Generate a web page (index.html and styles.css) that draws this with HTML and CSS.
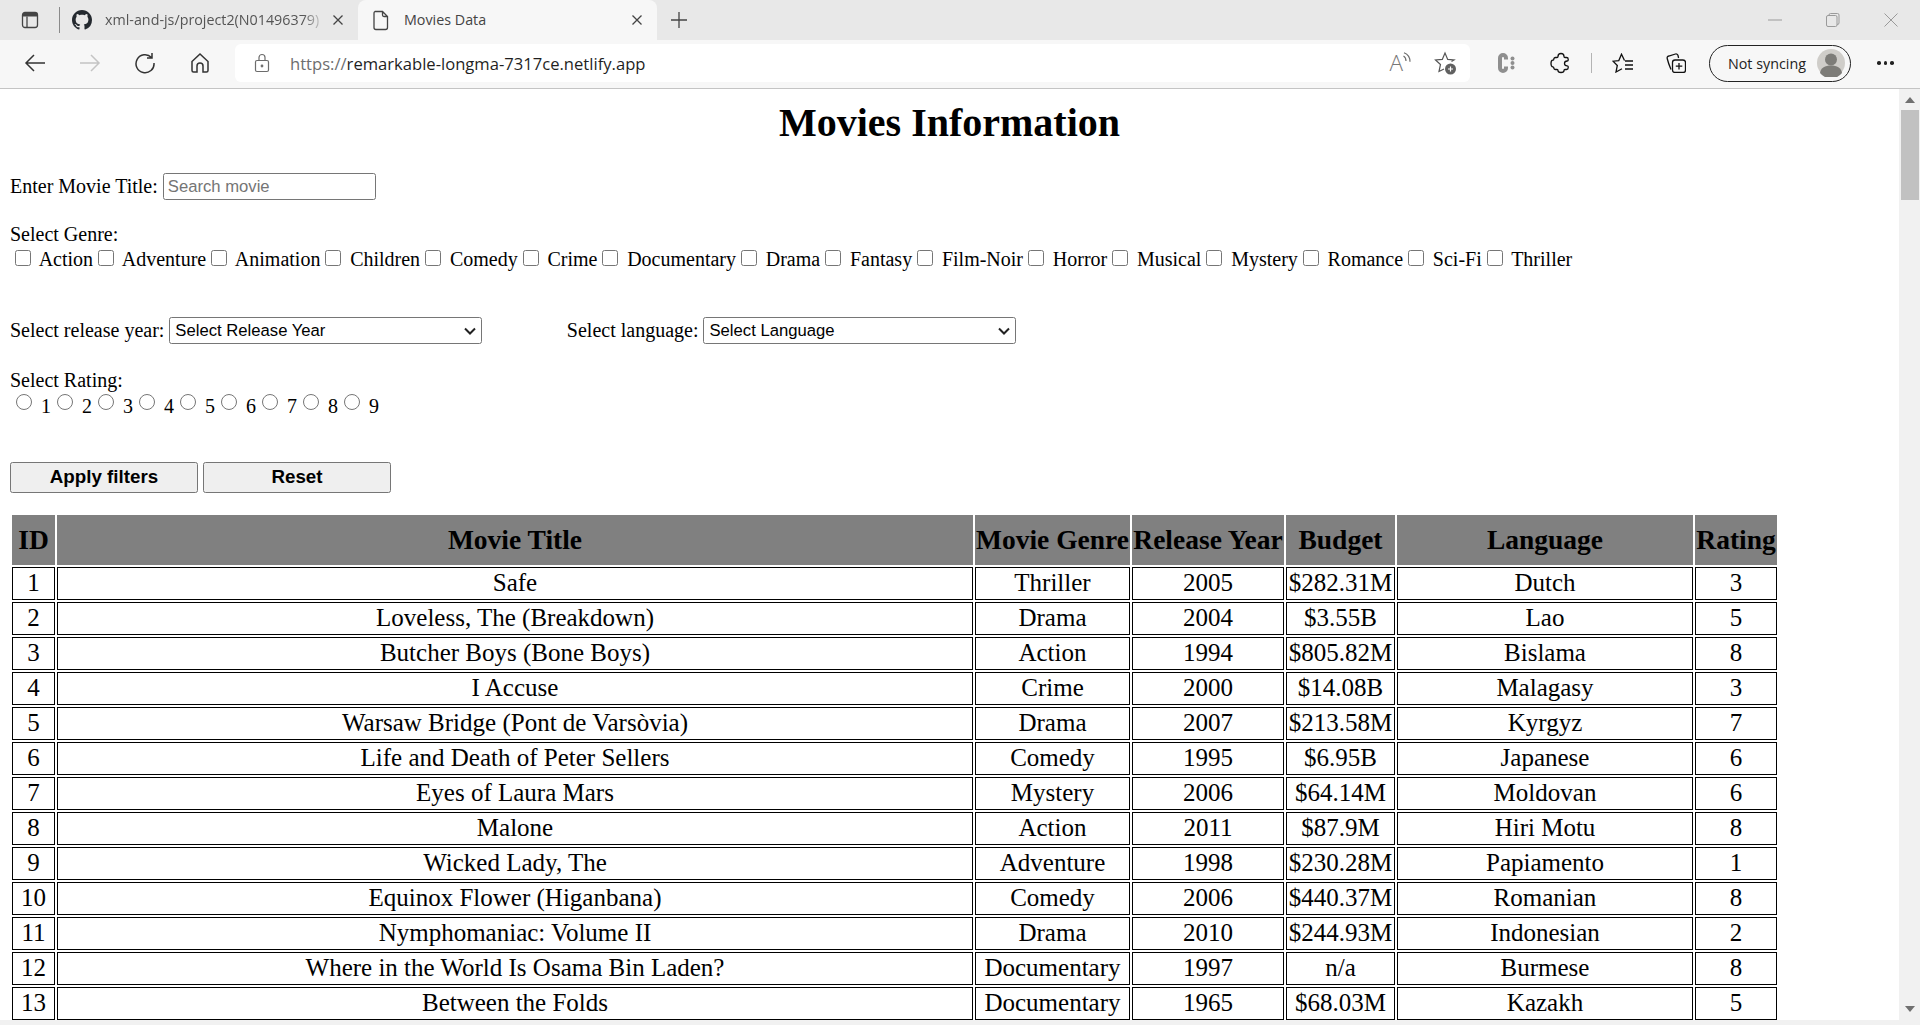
FILE: index.html
```html
<!DOCTYPE html>
<html lang="en">
<head>
<meta charset="utf-8">
<title>Movies Data</title>
<link rel="stylesheet" href="styles.css">
</head>
<body>
<div class="browser">
  <header class="tabstrip">
    <span class="strip-btn"><svg width="18" height="18" viewBox="0 0 18 18" class="ico"><rect x="1.500" y="1.500" width="15" height="15" rx="2.500"/><path d="M6 5.500v11"/><path d="M2 2h14v3.500H2z" fill="#444" stroke="none"/></svg></span>
    <span class="strip-div"></span>
    <div class="tab">
      <svg width="20" height="20" viewBox="0 0 16 16" class="tab-ico"><path fill="#24292f" d="M8 0C3.580 0 0 3.580 0 8c0 3.540 2.290 6.530 5.470 7.590.4.070.55-.17.55-.38 0-.19-.01-.82-.01-1.490-2.010.37-2.530-.49-2.690-.94-.09-.23-.48-.94-.82-1.130-.28-.15-.68-.52-.01-.53.63-.01 1.080.58 1.230.82.720 1.210 1.870.87 2.330.66.070-.52.280-.87.510-1.070-1.780-.2-3.640-.89-3.640-3.950 0-.87.310-1.590.820-2.150-.08-.2-.36-1.020.08-2.120 0 0 .670-.21 2.200.820.640-.180 1.320-.270 2-.270s1.360.090 2 .270c1.530-1.040 2.200-.820 2.200-.820.440 1.100.160 1.920.080 2.120.510.560.820 1.270.820 2.150 0 3.070-1.870 3.750-3.650 3.950.290.250.540.730.540 1.480 0 1.070-.010 1.930-.010 2.200 0 .210.150.460.550.380A8.013 8.013 0 0 0 16 8c0-4.420-3.580-8-8-8z"/></svg>
      <span class="tab-title fade">xml-and-js/project2(N01496379)</span>
      <svg width="14" height="14" viewBox="0 0 14 14" class="ico close-x"><path d="M2.500 2.500l9 9M11.500 2.500l-9 9"/></svg>
    </div>
    <div class="tab tab-active">
      <svg width="20" height="22" viewBox="0 0 20 22" class="ico"><path d="M4 2.500h7.500l5 5v11a2 2 0 0 1-2 2H5a2 2 0 0 1-2-2v-14a2 2 0 0 1 1-2zM11.500 2.500v3.500a1.500 1.500 0 0 0 1.500 1.500h3.500"/></svg>
      <span class="tab-title">Movies Data</span>
      <svg width="14" height="14" viewBox="0 0 14 14" class="ico close-x"><path d="M2.500 2.500l9 9M11.500 2.500l-9 9"/></svg>
    </div>
    <span class="new-tab"><svg width="18" height="18" viewBox="0 0 18 18" class="ico"><path d="M9 1v16M1 9h16"/></svg></span>
    <div class="window-btns">
      <span class="win-btn"><svg width="14" height="14" viewBox="0 0 14 14" class="ico faint"><path d="M0 7h14"/></svg></span>
      <span class="win-btn"><svg width="14" height="14" viewBox="0 0 14 14" class="ico faint"><rect x=".5" y="2.500" width="10.500" height="11" rx="1.500"/><path d="M3 2.500V2a1.500 1.500 0 0 1 1.500-1.500h7A1.500 1.500 0 0 1 13 2v8a1.500 1.500 0 0 1-2 1.300"/></svg></span>
      <span class="win-btn"><svg width="14" height="14" viewBox="0 0 14 14" class="ico faint"><path d="M.5.5l13 13M13.500.5l-13 13"/></svg></span>
    </div>
  </header>

  <nav class="toolbar">
    <span class="tool"><svg width="22" height="20" viewBox="0 0 22 20" class="ico dark"><path d="M21 10H2M10 2l-8 8 8 8"/></svg></span>
    <span class="tool"><svg width="22" height="20" viewBox="0 0 22 20" class="ico pale"><path d="M1 10h19M12 2l8 8-8 8"/></svg></span>
    <span class="tool"><svg width="22" height="22" viewBox="0 0 22 22" class="ico dark"><path d="M17.500 5.500A9 9 0 1 0 20 11M18 1v5h-5"/></svg></span>
    <span class="tool"><svg width="22" height="22" viewBox="0 0 22 22" class="ico dark"><path d="M3 9.500L11 2l8 7.500v9a1.500 1.500 0 0 1-1.500 1.500H14v-6a3 3 0 0 0-6 0v6H4.500A1.500 1.500 0 0 1 3 18.500z"/></svg></span>
    <div class="address">
      <svg width="16" height="20" viewBox="0 0 16 20" class="ico grey"><rect x="1.500" y="7.500" width="13" height="11" rx="1.500"/><path d="M5 7.500V4.500a3 3 0 0 1 6 0v3"/><circle cx="8" cy="13" r=".8"/></svg>
      <span class="url"><span class="url-scheme">https://</span>remarkable-longma-7317ce.netlify.app</span>
      <span class="addr-icons">
        <span class="addr-read">A<svg width="8" height="13" viewBox="0 0 8 13" class="ico grey"><path d="M.5 4c1.500.8 2.500 2.500 2.500 5M1 .7c3.500 1.300 6 4.300 6 9"/></svg></span>
        <svg width="24" height="24" viewBox="0 0 24 24" class="ico star-add"><path d="M18.500 10.500l2.500-1.500-6.300-.6L12 2 9.300 8.400 2.500 9l5 4.500-1.500 7 5-2.500"/><circle cx="17.500" cy="18" r="5.500" fill="#606060" stroke="none"/><path d="M17.500 15.500v5M15 18h5" stroke="#fff"/></svg>
      </span>
    </div>
    <span class="tool tool-first"><svg width="18" height="20" viewBox="0 0 18 20" class="ext-c"><path d="M9 6.500V5a3 3 0 0 0-6 0v10a3 3 0 0 0 6 0v-1.500" fill="none" stroke="#8f8f8f" stroke-width="4"/><circle cx="15.500" cy="5.500" r="2" fill="#8f8f8f"/><circle cx="15.500" cy="10" r="2" fill="#8f8f8f"/><circle cx="15.500" cy="14.500" r="2" fill="#8f8f8f"/></svg></span>
    <span class="tool"><svg width="22" height="22" viewBox="0 0 22 22" class="ico black"><path d="M8 4.500C8 2.800 9.300 1.500 11 1.500s3 1.300 3 3c0 .6.400 1 1 1h1.500c1 0 1.700.7 1.700 1.700V8c0 .6-.4 1-1 1-1.600 0-2.700 1-2.700 2.400s1.100 2.400 2.700 2.400c.6 0 1 .4 1 1v1c0 1-.7 1.700-1.700 1.700H15c-.6 0-1 .4-1 1 0 1.200-1.300 2-3 2s-3-.8-3-2c0-.6-.4-1-1-1H5.500c-1 0-1.700-.7-1.700-1.700 0-.6-.4-1-1-1C1.800 14.800 1 13.400 1 11.500S1.800 8.200 2.800 8.200c.6 0 1-.4 1-1 0-1 .7-1.700 1.700-1.700H7c.6 0 1-.4 1-1z"/></svg></span>
    <span class="tool-sep"></span>
    <span class="tool"><svg width="22" height="20" viewBox="0 0 22 20" class="ico black"><path d="M12.500 7.500L9.500 1.200 6.800 7.600 1 8.200l4.300 4.300L4 19l6-3.200M13 8h8M13 12h8M13 16h8"/></svg></span>
    <span class="tool"><svg width="20" height="20" viewBox="0 0 20 20" class="ico black coll"><rect x="6.500" y="7" width="13" height="12.500" rx="2.500"/><path d="M13 10v6.500M9.800 13.200h6.500M5 16.500C3.500 13 2 9 1.200 5.500a2 2 0 0 1 1.500-2.500L9.500 1a2 2 0 0 1 2.500 1.500l.6 2.500"/></svg></span>
    <div class="sync">
      <span>Not syncing</span>
      <span class="avatar"><svg width="28" height="28" viewBox="0 0 28 28"><circle cx="14" cy="14" r="14" fill="#cfcdc9"/><circle cx="14" cy="10.500" r="6" fill="#7d7c78"/><path d="M3 24c1-5.500 5-7.500 11-7.500s10 2 11 7.500a14 14 0 0 1-22 0z" fill="#7d7c78"/></svg></span>
    </div>
    <span class="tool tool-more"><i></i><i></i><i></i></span>
  </nav>

  <div class="viewport">
    <main class="page">
      <h1 class="title">Movies Information</h1>
      <div class="row-search">
        <label for="search">Enter Movie Title:</label>
        <input id="search" class="text-input" type="text" placeholder="Search movie">
      </div>
      <div class="row-genre">
        <div>Select Genre:</div>
        <input type="checkbox" class="check"> <label>Action</label><input type="checkbox" class="check"> <label>Adventure</label><input type="checkbox" class="check"> <label>Animation</label><input type="checkbox" class="check"> <label>Children</label><input type="checkbox" class="check"> <label>Comedy</label><input type="checkbox" class="check"> <label>Crime</label><input type="checkbox" class="check"> <label>Documentary</label><input type="checkbox" class="check"> <label>Drama</label><input type="checkbox" class="check"> <label>Fantasy</label><input type="checkbox" class="check"> <label>Film-Noir</label><input type="checkbox" class="check"> <label>Horror</label><input type="checkbox" class="check"> <label>Musical</label><input type="checkbox" class="check"> <label>Mystery</label><input type="checkbox" class="check"> <label>Romance</label><input type="checkbox" class="check"> <label>Sci-Fi</label><input type="checkbox" class="check"> <label>Thriller</label>
      </div>
      <div class="row-selects">
        <label>Select release year:</label>
        <span class="select-wrap">
          <select class="select"><option>Select Release Year</option></select>
          <svg width="12" height="8" viewBox="0 0 12 8" class="chevron"><path d="M1 1.500l5 5 5-5"/></svg>
        </span>
        <label class="lang-label">Select language:</label>
        <span class="select-wrap">
          <select class="select"><option>Select Language</option></select>
          <svg width="12" height="8" viewBox="0 0 12 8" class="chevron"><path d="M1 1.500l5 5 5-5"/></svg>
        </span>
      </div>
      <div class="row-rating">
        <div>Select Rating:</div>
        <div class="radio-line"><input type="radio" name="r" class="radio"> <label>1</label><input type="radio" name="r" class="radio"> <label>2</label><input type="radio" name="r" class="radio"> <label>3</label><input type="radio" name="r" class="radio"> <label>4</label><input type="radio" name="r" class="radio"> <label>5</label><input type="radio" name="r" class="radio"> <label>6</label><input type="radio" name="r" class="radio"> <label>7</label><input type="radio" name="r" class="radio"> <label>8</label><input type="radio" name="r" class="radio"> <label>9</label></div>
      </div>
      <div class="row-buttons">
        <button class="btn">Apply filters</button>
        <button class="btn">Reset</button>
      </div>
      <table class="movies">
        <colgroup>
          <col class="c-id"><col class="c-title"><col class="c-genre"><col class="c-year"><col class="c-budget"><col class="c-lang"><col class="c-rating">
        </colgroup>
        <thead>
          <tr><th>ID</th><th>Movie Title</th><th>Movie Genre</th><th>Release Year</th><th>Budget</th><th>Language</th><th>Rating</th></tr>
        </thead>
        <tbody>
          <tr><td>1</td><td>Safe</td><td>Thriller</td><td>2005</td><td>$282.31M</td><td>Dutch</td><td>3</td></tr>
          <tr><td>2</td><td>Loveless, The (Breakdown)</td><td>Drama</td><td>2004</td><td>$3.55B</td><td>Lao</td><td>5</td></tr>
          <tr><td>3</td><td>Butcher Boys (Bone Boys)</td><td>Action</td><td>1994</td><td>$805.82M</td><td>Bislama</td><td>8</td></tr>
          <tr><td>4</td><td>I Accuse</td><td>Crime</td><td>2000</td><td>$14.08B</td><td>Malagasy</td><td>3</td></tr>
          <tr><td>5</td><td>Warsaw Bridge (Pont de Varsòvia)</td><td>Drama</td><td>2007</td><td>$213.58M</td><td>Kyrgyz</td><td>7</td></tr>
          <tr><td>6</td><td>Life and Death of Peter Sellers</td><td>Comedy</td><td>1995</td><td>$6.95B</td><td>Japanese</td><td>6</td></tr>
          <tr><td>7</td><td>Eyes of Laura Mars</td><td>Mystery</td><td>2006</td><td>$64.14M</td><td>Moldovan</td><td>6</td></tr>
          <tr><td>8</td><td>Malone</td><td>Action</td><td>2011</td><td>$87.9M</td><td>Hiri Motu</td><td>8</td></tr>
          <tr><td>9</td><td>Wicked Lady, The</td><td>Adventure</td><td>1998</td><td>$230.28M</td><td>Papiamento</td><td>1</td></tr>
          <tr><td>10</td><td>Equinox Flower (Higanbana)</td><td>Comedy</td><td>2006</td><td>$440.37M</td><td>Romanian</td><td>8</td></tr>
          <tr><td>11</td><td>Nymphomaniac: Volume II</td><td>Drama</td><td>2010</td><td>$244.93M</td><td>Indonesian</td><td>2</td></tr>
          <tr><td>12</td><td>Where in the World Is Osama Bin Laden?</td><td>Documentary</td><td>1997</td><td>n/a</td><td>Burmese</td><td>8</td></tr>
          <tr><td>13</td><td>Between the Folds</td><td>Documentary</td><td>1965</td><td>$68.03M</td><td>Kazakh</td><td>5</td></tr>
        </tbody>
      </table>
    </main>
    <aside class="vscroll">
      <span class="arrow-up"></span>
      <span class="thumb"></span>
      <span class="arrow-down"></span>
    </aside>
  </div>
  <div class="hscroll"></div>
</div>
</body>
</html>
```
FILE: styles.css
```css
* { box-sizing: border-box; }
html, body { margin: 0; height: 100%; overflow: hidden; }
body { font-family: "Liberation Serif", serif; color: #000; background: #fff; }
.browser { height: 100vh; display: flex; flex-direction: column; overflow: hidden; }

.ico { fill: none; stroke: #444; stroke-width: 1.300; display: block; flex: none; }
.ico.faint { stroke: #9a9a9a; stroke-width: 1; }
.ico.dark { stroke: #333; stroke-width: 1.500; }
.ico.pale { stroke: #c4c4c4; stroke-width: 1.500; }
.ico.grey { stroke: #6c6c6c; stroke-width: 1.200; }
.ico.black { stroke: #111; stroke-width: 1.300; }
.ico.star-add { stroke: #555; stroke-width: 1.200; }
.coll { margin-right: 3px; }

.tabstrip { flex: none; height: 40px; background: #e8e8e8; display: flex; align-items: stretch; font-family: "Open Sans", sans-serif; color: #444; }
.strip-btn { width: 59px; display: flex; align-items: center; justify-content: center; }
.strip-div { width: 1px; height: 26px; background: #8a8a8a; align-self: center; margin-right: 12px; }
.tab { width: 286px; display: flex; align-items: center; gap: 13px; padding-right: 5px; padding-bottom: 1px; }
.tab-ico { flex: none; }
.tab-title { flex: 1; white-space: nowrap; overflow: hidden; font-size: 14.300px; padding-bottom: 1px; }
.fade { color: #555; margin-right: -7px; -webkit-mask-image: linear-gradient(90deg, #000 90%, transparent); mask-image: linear-gradient(90deg, #000 90%, transparent); }
.close-x { stroke: #444; margin-right: 8px; }
.tab-active { width: 299px; background: #f7f7f7; border-radius: 8px 8px 0 0; padding-left: 13px; }
.new-tab { width: 44px; display: flex; align-items: center; justify-content: center; }
.window-btns { margin-left: auto; display: flex; }
.win-btn { width: 58px; height: 40px; display: flex; align-items: center; justify-content: center; }

.toolbar { flex: none; height: 49px; background: #f7f7f7; border-bottom: 1px solid #c4c4c4; padding: 4px 0 6px 7px; display: flex; align-items: center; font-family: "Open Sans", sans-serif; }
.tool { width: 55px; flex: none; display: flex; align-items: center; justify-content: center; }
.address { width: 1235px; height: 38px; margin-left: 8px; background: #fff; border-radius: 6px; display: flex; align-items: center; padding-left: 19px; flex: none; }
.url { margin-left: 20px; font-size: 16.600px; color: #1f1f1f; white-space: nowrap; }
.url-scheme { color: #6e6e6e; }
.addr-icons { margin-left: auto; display: flex; align-items: center; gap: 22px; padding-right: 13px; }
.addr-read { display: flex; align-items: flex-start; font-size: 22.500px; color: #777; line-height: 1; font-weight: 300; }
.tool-first { margin-left: 8px; }
.ext-c { display: block; flex: none; }
.tool-sep { width: 1px; height: 20px; background: #b4b4b4; margin: 0 3px; flex: none; }
.sync { width: 142px; height: 37px; margin-left: 4px; border: 1.500px solid #222; border-radius: 19px; display: flex; align-items: center; justify-content: space-between; padding: 0 5px 0 18px; font-size: 14.300px; color: #222; flex: none; }
.avatar { display: block; width: 28px; height: 28px; }
.avatar svg { display: block; }
.tool-more { margin-left: 7px; gap: 3px; }
.tool-more i { width: 3.500px; height: 3.500px; background: #222; border-radius: 50%; display: block; }

.viewport { flex: 1; min-height: 0; display: flex; overflow: hidden; }
.page { flex: 1; min-width: 0; padding: 11px 10px 0; font-size: 20px; overflow: hidden; }
.title { margin: 0; font-size: 40px; font-weight: bold; text-align: center; line-height: 46px; }
.row-search { margin-top: 26px; height: 28px; display: flex; align-items: center; }
.text-input { width: 213px; height: 27px; margin-left: 5px; padding: 2px 4px 0; border: 1px solid #767676; border-radius: 2.500px; font: 16.670px "Liberation Sans", sans-serif; }
.text-input::placeholder { color: #757575; }
.row-genre { margin-top: 23px; }
.check { width: 16px; height: 16px; margin: 3.750px 3.750px 3.750px 5px; }
.row-selects { margin-top: 46px; height: 28px; display: flex; align-items: center; }
.select-wrap { display: block; position: relative; margin-left: 5px; height: 27px; }
.select { appearance: none; -webkit-appearance: none; display: block; width: 312.500px; height: 27px; padding: 0 24px 0 5px; font: 16.670px "Liberation Sans", sans-serif; background: #fff; border: 1px solid #767676; border-radius: 2.500px; color: #000; }
.chevron { position: absolute; right: 6px; top: 10px; fill: none; stroke: #222; stroke-width: 2; pointer-events: none; }
.lang-label { margin-left: 85px; }
.row-rating { margin-top: 24px; }
.radio-line { height: 29px; line-height: 29px; }
.radio { width: 16px; height: 16px; margin: 0 3.750px 0 6.250px; vertical-align: 2.500px; }
.row-buttons { margin-top: 41px; display: flex; gap: 5px; }
.btn { width: 188px; height: 31px; padding: 0; background: #efefef; border: 1px solid #767676; border-radius: 2.500px; font: bold 18.750px "Liberation Sans", sans-serif; color: #000; }

.movies { margin-top: 20px; width: 1769px; table-layout: fixed; border-collapse: separate; border-spacing: 2px; }
.c-id { width: 43px; }
.c-title { width: 916px; }
.c-genre { width: 155px; }
.c-year { width: 152px; }
.c-budget { width: 109px; }
.c-lang { width: 296px; }
.c-rating { width: 82px; }
.movies th { background: #808080; height: 50px; padding: 0; font-size: 27.500px; font-weight: bold; white-space: nowrap; }
.movies td { border: 1px solid #000; height: 33px; padding: 0 0 1px; font-size: 25px; line-height: 27px; text-align: center; white-space: nowrap; }

.vscroll { flex: none; width: 21px; background: #f1f1f1; display: flex; flex-direction: column; align-items: center; }
.arrow-up { margin-top: 8px; width: 0; height: 0; border: 5px solid transparent; border-top: 0; border-bottom: 6px solid #707070; }
.thumb { margin-top: 7px; width: 18px; height: 90px; background: #c1c1c1; }
.arrow-down { margin-top: auto; margin-bottom: 8px; width: 0; height: 0; border: 5px solid transparent; border-bottom: 0; border-top: 6px solid #707070; }
.hscroll { flex: none; height: 5px; background: #f1f1f1; }
```
